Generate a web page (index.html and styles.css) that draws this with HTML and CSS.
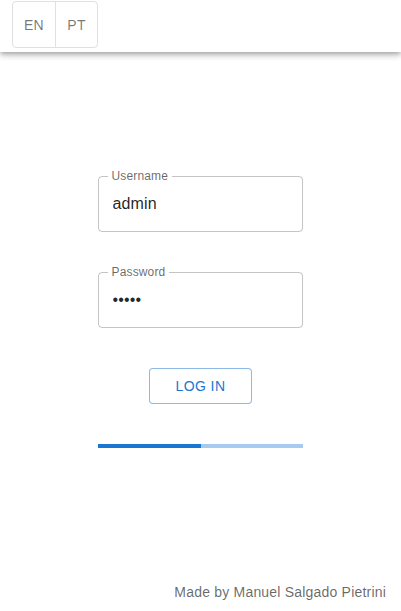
FILE: index.html
```html
<!DOCTYPE html>
<html lang="en">
<head>
<meta charset="utf-8">
<title>Login</title>
<link rel="stylesheet" href="styles.css">
</head>
<body>
<header class="appbar">
  <div class="lang-group">
    <button class="lang-btn">EN</button>
    <button class="lang-btn">PT</button>
  </div>
</header>
<main class="main">
  <form class="login-form">
    <div class="field">
      <label class="field-label">Username</label>
      <input class="field-input" type="text" value="admin">
    </div>
    <div class="field">
      <label class="field-label">Password</label>
      <input class="field-input" type="password" value="admin">
    </div>
    <button type="button" class="login-btn">Log in</button>
    <div class="progress"><div class="progress-bar" style="width: 50.5%"></div></div>
  </form>
</main>
<footer class="footer">Made by Manuel Salgado Pietrini</footer>
</body>
</html>
```

FILE: styles.css
```css
* { box-sizing: border-box; }
html, body { height: 100%; }
body {
  margin: 0;
  font-family: "Liberation Sans", Arial, sans-serif;
  background: #fff;
  display: flex;
  flex-direction: column;
  min-height: 100vh;
}
.appbar {
  height: 52px;
  flex: none;
  background: #fff;
  padding: 1px 12px 0;
  box-shadow: 0 2px 4px -1px rgba(0,0,0,0.2), 0 4px 5px 0 rgba(0,0,0,0.14), 0 1px 10px 0 rgba(0,0,0,0.12);
  position: relative;
  z-index: 1;
}
.lang-group {
  display: inline-flex;
  height: 47px;
  border: 1px solid rgba(0,0,0,0.12);
  border-radius: 4px;
}
.lang-btn {
  border: none;
  background: transparent;
  font-family: "Liberation Sans", Arial, sans-serif;
  font-size: 14px;
  letter-spacing: 0.4px;
  color: rgba(0,0,0,0.54);
  padding: 0;
  width: 42px;
  height: 100%;
}
.lang-btn + .lang-btn {
  border-left: 1px solid rgba(0,0,0,0.12);
}
.main {
  flex: 1;
  padding-top: 124px;
  display: flex;
  justify-content: center;
}
.login-form {
  width: 205px;
  display: flex;
  flex-direction: column;
  align-items: stretch;
  gap: 40px;
  margin-left: -1px;
}
.field {
  position: relative;
  height: 56px;
  border: 1px solid rgba(0,0,0,0.23);
  border-radius: 4px;
}
.field-label {
  position: absolute;
  left: 9px;
  top: -8px;
  padding: 0 4px;
  background: #fff;
  font-size: 12px;
  line-height: 14px;
  letter-spacing: 0.15px;
  color: rgba(0,0,0,0.6);
}
.field-input {
  display: block;
  width: 100%;
  height: 100%;
  border: none;
  outline: none;
  background: transparent;
  padding: 0 14px;
  font-family: "Liberation Sans", Arial, sans-serif;
  font-size: 16px;
  letter-spacing: 0.15px;
  color: rgba(0,0,0,0.87);
}
.login-btn {
  align-self: center;
  width: 103px;
  height: 36px;
  border: 1px solid rgba(25,118,210,0.5);
  border-radius: 4px;
  background: #fff;
  color: #1976d2;
  font-family: "Liberation Sans", Arial, sans-serif;
  font-size: 14px;
  font-weight: 400;
  letter-spacing: 0.4px;
  text-transform: uppercase;
  padding: 0;
  margin-left: 1px;
}
.progress {
  height: 4px;
  background: rgb(167,202,238);
}
.progress-bar {
  height: 100%;
  background: #1976d2;
}
.footer {
  flex: none;
  text-align: right;
  padding: 0 15px 9px;
  font-family: "Liberation Sans", Arial, sans-serif;
  font-size: 14px;
  line-height: 20px;
  letter-spacing: 0.2px;
  color: rgba(0,0,0,0.6);
}
```
